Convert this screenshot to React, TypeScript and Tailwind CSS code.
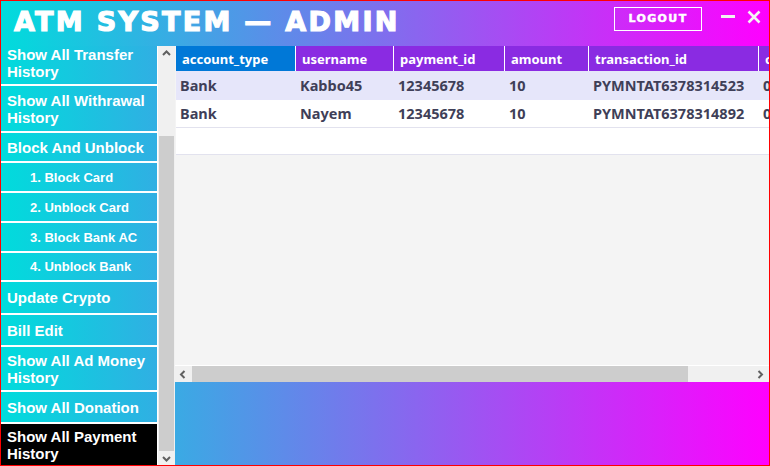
import React from "react";

type SideItem = { label: string; box: string; sub?: boolean; active?: boolean };

const sideItems: SideItem[] = [
  { label: "Show All Transfer History", box: "h-[43px] -mt-[5px]" },
  { label: "Show All Withrawal History", box: "h-[45px]" },
  { label: "Block And Unblock", box: "h-[28px]" },
  { label: "1. Block Card", box: "h-[28px]", sub: true },
  { label: "2. Unblock Card", box: "h-[28px]", sub: true },
  { label: "3. Block Bank AC", box: "h-[28px]", sub: true },
  { label: "4. Unblock Bank", box: "h-[27px]", sub: true },
  { label: "Update Crypto", box: "h-[31px]" },
  { label: "Bill Edit", box: "h-[30px]" },
  { label: "Show All Ad Money History", box: "h-[43px]" },
  { label: "Show All Donation", box: "h-[30px]" },
  { label: "Show All Payment History", box: "h-[42px]", active: true },
];

const columns = [
  { key: "account_type", w: "w-[120px]", head: "bg-[#0078d7]" },
  { key: "username", w: "w-[98px]", head: "bg-[#8a2be2]" },
  { key: "payment_id", w: "w-[111px]", head: "bg-[#8a2be2]" },
  { key: "amount", w: "w-[84px]", head: "bg-[#8a2be2]" },
  { key: "transaction_id", w: "w-[170px]", head: "bg-[#8a2be2]" },
  { key: "created_at", w: "w-[120px]", head: "bg-[#8a2be2]" },
];

const rows: Record<string, string>[] = [
  {
    account_type: "Bank",
    username: "Kabbo45",
    payment_id: "12345678",
    amount: "10",
    transaction_id: "PYMNTAT6378314523",
    created_at: "09-11-2022",
  },
  {
    account_type: "Bank",
    username: "Nayem",
    payment_id: "12345678",
    amount: "10",
    transaction_id: "PYMNTAT6378314892",
    created_at: "09-11-2022",
  },
];

function Chevron({ dir }: { dir: "up" | "down" | "left" | "right" }) {
  const pts = {
    up: "1,5 4.5,1.5 8,5",
    down: "1,2 4.5,5.5 8,2",
    left: "5.5,1 2,4.5 5.5,8",
    right: "2.5,1 6,4.5 2.5,8",
  }[dir];
  return (
    <svg width="9" height="9" viewBox="0 0 9 9">
      <polyline points={pts} fill="none" stroke="#606060" strokeWidth="2" />
    </svg>
  );
}

export default function App() {
  return (
    <div className="flex h-[466px] w-[770px] flex-col overflow-hidden border border-[#ff0000] bg-[linear-gradient(to_right,#00dcdc,#ff00ff)] font-['Liberation_Sans',sans-serif]">
      {/* title bar */}
      <div className="flex h-[45px] shrink-0 items-start text-white">
        <div className="pl-[13px] pt-[7px] font-['DejaVu_Sans',sans-serif] text-[27px] font-bold leading-none tracking-[2.3px] [-webkit-text-stroke:1.2px_white]">
          ATM SYSTEM — ADMIN
        </div>
        <button className="ml-auto mt-[6px] flex h-[24px] w-[88px] items-center justify-center border border-white font-['DejaVu_Sans',sans-serif] text-[11px] font-bold tracking-[1.4px] [-webkit-text-stroke:0.5px_white]">
          LOGOUT
        </button>
        <div className="ml-[19px] mt-[14px] h-[3px] w-[14px] bg-[#f2f2f2]" />
        <svg className="ml-[12px] mr-[8px] mt-[9px]" width="14" height="14" viewBox="0 0 14 14">
          <path d="M1.5 1.5 L12.5 12.5 M12.5 1.5 L1.5 12.5" stroke="#f4f4f4" strokeWidth="2.6" />
        </svg>
      </div>

      <div className="flex min-h-0 flex-1">
        {/* sidebar */}
        <div className="flex w-[174px] shrink-0 bg-white">
          <div className="flex w-[156px] flex-col gap-[2px] overflow-hidden">
            {sideItems.map((item) => (
              <div
                key={item.label}
                className={`flex shrink-0 items-center text-white ${item.box} ${
                  item.active ? "bg-black" : "bg-[linear-gradient(to_right,#00dcdc,#30afe3)]"
                } ${item.sub ? "pl-[29px] text-[13px]" : "pl-[6px] pr-[8px] text-[15px]"} font-bold leading-[17px]`}
              >
                {item.label}
              </div>
            ))}
          </div>
          <div className="w-px bg-white" />
          <div className="flex w-[17px] flex-col bg-[#f0f0f0]">
            <div className="flex h-[17px] items-center justify-center">
              <Chevron dir="up" />
            </div>
            <div className="h-[73px]" />
            <div className="mx-px h-[315px] bg-[#cdcdcd]" />
            <div className="flex h-[14px] items-end justify-center pb-[1px]">
              <Chevron dir="down" />
            </div>
          </div>
        </div>

        {/* grid */}
        <div className="flex min-w-0 flex-1 flex-col">
          <div className="flex h-[319px] flex-col overflow-hidden border-l border-[#f4f4f4] bg-[#f4f4f4] font-['Noto_Sans',sans-serif]">
            <div className="flex h-[25px] shrink-0">
              {columns.map((c) => (
                <div
                  key={c.key}
                  className={`flex shrink-0 items-center border-r border-white pl-[6px] pt-[2px] text-[13px] font-bold text-white ${c.w} ${c.head}`}
                >
                  {c.key}
                </div>
              ))}
            </div>
            {rows.map((r, i) => (
              <div
                key={i}
                className={`flex shrink-0 ${i === 0 ? "h-[29px] bg-[#e6e6fa]" : "h-[28px] border-b border-[#e2e2ee] bg-white"}`}
              >
                {columns.map((c) => (
                  <div
                    key={c.key}
                    className={`flex shrink-0 items-center pl-[4px] pt-[1px] text-[14.5px] font-bold text-[#3f3f58] ${c.w}`}
                  >
                    {r[c.key]}
                  </div>
                ))}
              </div>
            ))}
            <div className="h-[27px] shrink-0 border-b border-[#e2e2ee] bg-white" />
          </div>

          {/* horizontal scrollbar */}
          <div className="flex h-[17px] shrink-0 border-t border-white bg-[#f0f0f0]">
            <div className="flex w-[17px] items-center justify-center">
              <Chevron dir="left" />
            </div>
            <div className="w-[496px] bg-[#cdcdcd]" />
            <div className="ml-auto flex w-[17px] items-center justify-center">
              <Chevron dir="right" />
            </div>
          </div>
        </div>
      </div>
    </div>
  );
}
